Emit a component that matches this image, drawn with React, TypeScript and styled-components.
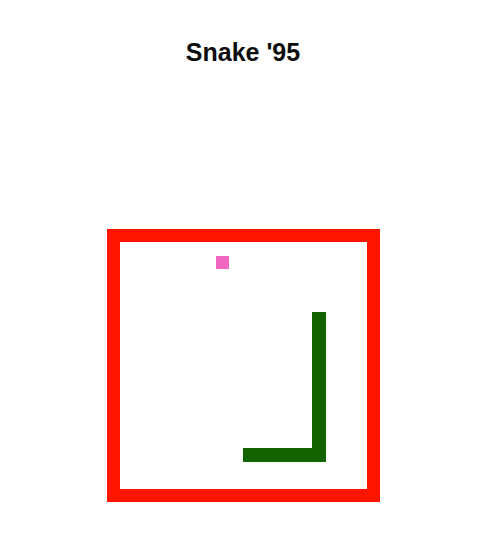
import React from "react";
import styled, { createGlobalStyle } from "styled-components";

const Global = createGlobalStyle`
  html, body { margin: 0; padding: 0; background: #ffffff; }
  body { font-family: "Liberation Sans", Arial, sans-serif; }
`;

const Page = styled.div`
  width: 470px;
  margin-left: 8px;
  display: flex;
  flex-direction: column;
  align-items: center;
`;

const Title = styled.h1`
  margin: 38px 0 0;
  font-size: 25px;
  line-height: 28px;
  font-weight: bold;
  color: #0d0d0d;
`;

const Board = styled.div`
  position: relative;
  margin-top: 163px;
  width: 247px;
  height: 247px;
  border: 13px solid #ff1400;
`;

const Block = styled.div<{ $color: string }>`
  position: absolute;
  background: ${(p) => p.$color};
`;

type Rect = { x: number; y: number; w: number; h: number };

const food: Rect = { x: 96, y: 14, w: 13, h: 13 };
const snake: Rect[] = [
  { x: 192, y: 70, w: 14, h: 150 },
  { x: 123, y: 206, w: 83, h: 14 },
];

export default function App() {
  return (
    <>
      <Global />
      <Page>
        <Title>Snake '95</Title>
        <Board>
          <Block
            $color="#f066c0"
            style={{ left: food.x, top: food.y, width: food.w, height: food.h }}
          />
          {snake.map((s, i) => (
            <Block
              key={i}
              $color="#136400"
              style={{ left: s.x, top: s.y, width: s.w, height: s.h }}
            />
          ))}
        </Board>
      </Page>
    </>
  );
}
